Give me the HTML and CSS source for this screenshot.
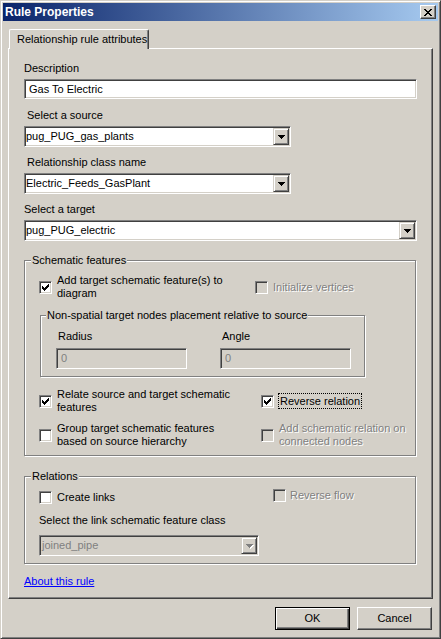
FILE: index.html
```
<!DOCTYPE html>
<html>
<head>
<meta charset="utf-8">
<title>Rule Properties</title>
<link rel="stylesheet" href="styles.css">
</head>
<body>
<div class="window">
  <div class="titlebar">
    <span class="title">Rule Properties</span>
    <span class="close"><svg width="8" height="7" viewBox="0 0 8 7"><path fill="#000" d="M0 0h2v1H0z M6 0h2v1H6z M1 1h2v1H1z M5 1h2v1H5z M2 2h4v1H2z M3 3h2v1H3z M2 4h4v1H2z M1 5h2v1H1z M5 5h2v1H5z M0 6h2v1H0z M6 6h2v1H6z"/></svg></span>
  </div>
  <div class="client">
    <div class="tabs"><div class="tab">Relationship rule attributes</div></div>
    <div class="panel">
      <div class="lbl">Description</div>
      <div class="edit">Gas To Electric</div>

      <div class="lbl ind mt10">Select a source</div>
      <div class="combo half"><span class="ctext">pug_PUG_gas_plants</span><span class="cbtn"><svg width="7" height="4" viewBox="0 0 7 4"><path fill="#000" d="M0 0h7v1H0z M1 1h5v1H1z M2 2h3v1H2z M3 3h1v1H3z"/></svg></span></div>

      <div class="lbl ind mt9">Relationship class name</div>
      <div class="combo half"><span class="ctext">Electric_Feeds_GasPlant</span><span class="cbtn"><svg width="7" height="4" viewBox="0 0 7 4"><path fill="#000" d="M0 0h7v1H0z M1 1h5v1H1z M2 2h3v1H2z M3 3h1v1H3z"/></svg></span></div>

      <div class="lbl mt9">Select a target</div>
      <div class="combo"><span class="ctext">pug_PUG_electric</span><span class="cbtn"><svg width="7" height="4" viewBox="0 0 7 4"><path fill="#000" d="M0 0h7v1H0z M1 1h5v1H1z M2 2h3v1H2z M3 3h1v1H3z"/></svg></span></div>

      <div class="group schem">
        <div class="gtitle">Schematic features</div>
        <div class="cbrow mt7">
          <div class="cbitem w216">
            <span class="box"><svg width="11" height="11" viewBox="0 0 11 11"><path fill="#000" d="M8 2h1v1H8z M7 3h2v1H7z M2 4h1v1H2z M6 4h3v1H6z M2 5h2v1H2z M5 5h3v1H5z M2 6h5v1H2z M3 7h3v1H3z M4 8h1v1H4z"/></svg></span>
            <span class="ctxt">Add target schematic feature(s) to<br>diagram</span>
          </div>
          <div class="cbitem">
            <span class="box off"></span>
            <span class="ctxt dis">Initialize vertices</span>
          </div>
        </div>

        <div class="group inner">
          <div class="gtitle it">Non-spatial target nodes placement relative to source</div>
          <div class="fields">
            <div class="fcol">
              <div class="lbl fl">Radius</div>
              <div class="dedit">0</div>
            </div>
            <div class="fcol">
              <div class="lbl fl">Angle</div>
              <div class="dedit">0</div>
            </div>
          </div>
        </div>

        <div class="cbrow mt11">
          <div class="cbitem w222">
            <span class="box"><svg width="11" height="11" viewBox="0 0 11 11"><path fill="#000" d="M8 2h1v1H8z M7 3h2v1H7z M2 4h1v1H2z M6 4h3v1H6z M2 5h2v1H2z M5 5h3v1H5z M2 6h5v1H2z M3 7h3v1H3z M4 8h1v1H4z"/></svg></span>
            <span class="ctxt">Relate source and target schematic<br>features</span>
          </div>
          <div class="cbitem g4">
            <span class="box"><svg width="11" height="11" viewBox="0 0 11 11"><path fill="#000" d="M8 2h1v1H8z M7 3h2v1H7z M2 4h1v1H2z M6 4h3v1H6z M2 5h2v1H2z M5 5h3v1H5z M2 6h5v1H2z M3 7h3v1H3z M4 8h1v1H4z"/></svg></span>
            <span class="ctxt focus">Reverse relation</span>
          </div>
        </div>

        <div class="cbrow mt8">
          <div class="cbitem w222">
            <span class="box"></span>
            <span class="ctxt">Group target schematic features<br>based on source hierarchy</span>
          </div>
          <div class="cbitem">
            <span class="box off"></span>
            <span class="ctxt dis">Add schematic relation on<br>connected nodes</span>
          </div>
        </div>
      </div>

      <div class="group rel">
        <div class="gtitle">Relations</div>
        <div class="cbrow mt8">
          <div class="cbitem w234">
            <span class="box"></span>
            <span class="ctxt">Create links</span>
          </div>
          <div class="cbitem up2 g4">
            <span class="box off"></span>
            <span class="ctxt dis">Reverse flow</span>
          </div>
        </div>
        <div class="lbl mt10">Select the link schematic feature class</div>
        <div class="combo dcombo"><span class="ctext">joined_pipe</span><span class="cbtn"><svg width="8" height="5" viewBox="0 0 8 5"><path fill="#fff" d="M1 1h7v1H1z M2 2h5v1H2z M3 3h3v1H3z M4 4h1v1H4z"/><path fill="#808080" d="M0 0h7v1H0z M1 1h5v1H1z M2 2h3v1H2z M3 3h1v1H3z"/></svg></span></div>
      </div>

      <div class="about"><span class="link">About this rule</span></div>
    </div>
    <div class="buttons">
      <div class="btn default">OK</div>
      <div class="btn">Cancel</div>
    </div>
  </div>
</div>
</body>
</html>
```
FILE: styles.css
```
* { box-sizing: border-box; }
body {
  margin: 0;
  font-family: "Liberation Sans", Arial, sans-serif;
  font-size: 11px;
  line-height: 13px;
  color: #000;
  background: #d4d0c8;
}
.window {
  width: 441px;
  height: 639px;
  border: 1px solid;
  border-color: #d4d0c8 #404040 #404040 #d4d0c8;
  box-shadow: inset 1px 1px #fff, inset -1px -1px #808080;
  padding: 2px;
  background: #d4d0c8;
  display: flex;
  flex-direction: column;
}
.titlebar {
  height: 18px;
  flex: none;
  background: linear-gradient(to right, #0a246a, #a6caf0);
  display: flex;
  align-items: center;
  justify-content: space-between;
  padding: 0 2px;
}
.title {
  color: #fff;
  font-weight: bold;
  font-size: 12px;
  line-height: 14px;
}
.close {
  width: 16px;
  height: 14px;
  background: #d4d0c8;
  border: 1px solid;
  border-color: #fff #404040 #404040 #fff;
  box-shadow: inset -1px -1px #808080;
  display: flex;
  align-items: center;
  justify-content: center;
}
.close svg { display: block; }
.client {
  padding: 8px 5px 0;
  display: flex;
  flex-direction: column;
}
.tabs {
  display: flex;
  height: 20px;
  margin-bottom: -1px;
  position: relative;
  z-index: 1;
}
.tab {
  width: 140px;
  height: 20px;
  margin-left: 1px;
  background: #d4d0c8;
  border-top: 1px solid #fff;
  border-left: 1px solid #fff;
  border-right: 1px solid #404040;
  box-shadow: inset -1px 0 #808080;
  border-top-left-radius: 2px;
  border-top-right-radius: 2px;
  padding-left: 7px;
  display: flex;
  align-items: center;
  white-space: nowrap;
}
.panel {
  height: 551px;
  border: 1px solid;
  border-color: #fff #404040 #404040 #fff;
  box-shadow: inset -1px -1px #808080;
  padding: 13px 15px 0;
}
.lbl { height: 13px; white-space: nowrap; }
.ind { padding-left: 3px; }
.mt7 { margin-top: 7px; }
.mt8 { margin-top: 8px; }
.mt9 { margin-top: 9px; }
.mt10 { margin-top: 10px; }
.mt11 { margin-top: 11px; }

.edit, .combo, .dedit {
  border: 1px solid;
  border-color: #808080 #fff #fff #808080;
  box-shadow: inset 1px 1px #404040, inset -1px -1px #d4d0c8;
  display: flex;
  align-items: center;
  white-space: nowrap;
}
.edit {
  height: 20px;
  margin-top: 4px;
  background: #fff;
  padding-left: 4px;
}
.combo {
  height: 21px;
  margin-top: 4px;
  background: #fff;
  padding-left: 1px;
}
.combo.half { width: 267px; }
.cbtn {
  margin-left: auto;
  margin-right: 1px;
  width: 16px;
  height: 17px;
  flex: none;
  background: #d4d0c8;
  border: 1px solid;
  border-color: #d4d0c8 #404040 #404040 #d4d0c8;
  box-shadow: inset 1px 1px #fff, inset -1px -1px #808080;
  display: flex;
  align-items: center;
  justify-content: center;
}
.cbtn svg { display: block; }
.dcombo {
  width: 220px;
  margin-top: 8px;
  background: #d4d0c8;
  color: #808080;
  padding-left: 2px;
}
.dcombo .cbtn svg { margin-left: 1px; margin-top: 1px; }

.group {
  border: 1px solid #808080;
  box-shadow: inset 1px 1px #fff, 1px 1px #fff;
  padding: 0 0 7px 14px;
  margin-right: 1px;
}
.schem { margin-top: 19px; }
.rel { margin-top: 20px; }
.gtitle {
  width: fit-content;
  height: 13px;
  margin: -7px 0 0 -8px;
  padding: 0 1px;
  background: #d4d0c8;
  white-space: nowrap;
}
.inner {
  width: 325px;
  margin: 15px 0 0 1px;
  padding: 0 0 7px 15px;
}
.gtitle.it { margin-left: -10px; }
.fields {
  display: grid;
  grid-template-columns: 131px 131px;
  column-gap: 33px;
  margin-top: 8px;
}
.fl { padding-left: 2px; }
.dedit {
  height: 21px;
  margin-top: 5px;
  background: #d4d0c8;
  color: #808080;
  padding-left: 4px;
}

.cbrow {
  display: flex;
  align-items: center;
}
.cbitem {
  display: flex;
  align-items: center;
  gap: 5px;
  flex: none;
}
.cbitem.g4 { gap: 4px; }
.w216 { width: 216px; }
.w222 { width: 222px; }
.w234 { width: 234px; }
.up2 { margin-top: -4px; }
.box {
  width: 13px;
  height: 13px;
  flex: none;
  border: 1px solid;
  border-color: #808080 #fff #fff #808080;
  box-shadow: inset 1px 1px #404040, inset -1px -1px #d4d0c8;
  background: #fff;
}
.box svg { display: block; }
.box.off { background: #d4d0c8; }
.ctxt { white-space: nowrap; }
.dis {
  color: #808080;
  text-shadow: 1px 1px 0 #fff;
}
.focus {
  border: 1px dotted #000;
  padding: 0 1px;
  line-height: 14px;
}
.about { margin-top: 11px; height: 13px; }
.link {
  color: #0000ff;
  text-decoration: underline;
}
.buttons {
  display: flex;
  justify-content: flex-end;
  gap: 7px;
  margin-top: 8px;
  padding-right: 1px;
}
.btn {
  width: 75px;
  height: 23px;
  border: 1px solid;
  border-color: #fff #404040 #404040 #fff;
  box-shadow: inset -1px -1px #808080;
  display: flex;
  align-items: center;
  justify-content: center;
  background: #d4d0c8;
}
.btn.default {
  border-color: #000;
  box-shadow: inset 1px 1px #fff, inset -1px -1px #404040, inset -2px -2px #808080;
}
```
